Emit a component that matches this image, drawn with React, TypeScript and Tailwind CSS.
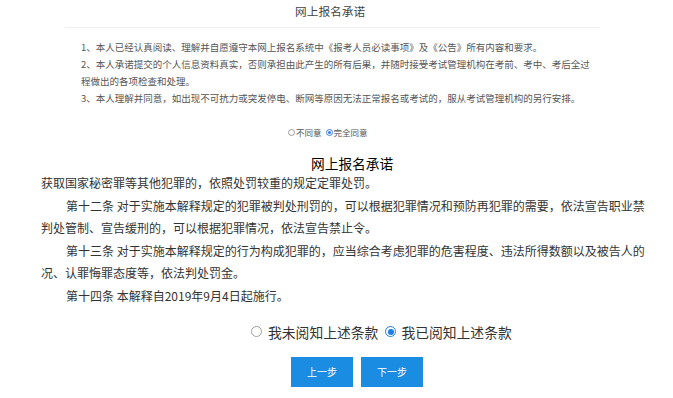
const cjk = 'font-[Noto_Sans_CJK_SC,sans-serif]';

const promises = [
  '1、本人已经认真阅读、理解并自愿遵守本网上报名系统中《报考人员必读事项》及《公告》所有内容和要求。',
  '2、本人承诺提交的个人信息资料真实，否则承担由此产生的所有后果，并随时接受考试管理机构在考前、考中、考后全过',
  '程做出的各项检查和处理。',
  '3、本人理解并同意，如出现不可抗力或突发停电、断网等原因无法正常报名或考试的，服从考试管理机构的另行安排。'
];

// [text, indented]
const articleLines: [string, boolean][] = [
  ['获取国家秘密罪等其他犯罪的，依照处罚较重的规定定罪处罚。', false],
  ['第十二条 对于实施本解释规定的犯罪被判处刑罚的，可以根据犯罪情况和预防再犯罪的需要，依法宣告职业禁', true],
  ['判处管制、宣告缓刑的，可以根据犯罪情况，依法宣告禁止令。', false],
  ['第十三条 对于实施本解释规定的行为构成犯罪的，应当综合考虑犯罪的危害程度、违法所得数额以及被告人的', true],
  ['况、认罪悔罪态度等，依法判处罚金。', false],
  ['第十四条 本解释自2019年9月4日起施行。', true]
];

const SmallRadio = ({ checked }: { checked?: boolean }) =>
  checked ? (
    <span className="flex h-[7px] w-[7px] items-center justify-center rounded-full border border-[#3b82d6] bg-white">
      <span className="h-[3px] w-[3px] rounded-full bg-[#2f7ad6]" />
    </span>
  ) : (
    <span className="h-[7px] w-[7px] rounded-full border border-[#9a9a9a] bg-white" />
  );

const Radio = ({ checked }: { checked?: boolean }) =>
  checked ? (
    <span className="flex h-[11px] w-[11px] items-center justify-center rounded-full border border-[#1a7fe0] bg-white">
      <span className="h-[6px] w-[6px] rounded-full bg-[#1a7fe0]" />
    </span>
  ) : (
    <span className="h-[11px] w-[11px] rounded-full border border-[#a0a0a0] bg-white" />
  );

export default function App() {
  return (
    <div className={`h-[398px] w-[673px] overflow-hidden bg-white ${cjk}`}>
      <section className="text-[#555]">
        <div className="pl-[295px] text-[11.7px] leading-[22px] text-[#444]">网上报名承诺</div>
        <div className="ml-[65px] mr-[73px] mt-[5px] border-t border-[#f0f0f0]" />
        <div className="mt-[11px] pl-[81px] text-[9.5px] leading-[17px]">
          {promises.map((line) => (
            <div className="whitespace-nowrap" key={line}>
              {line}
            </div>
          ))}
        </div>
        <div className="mt-[18px] flex items-center pl-[288px] text-[8.5px] leading-[14px]">
          <SmallRadio />
          <span className="ml-px">不同意</span>
          <span className="ml-[4px]">
            <SmallRadio checked />
          </span>
          <span className="ml-px">完全同意</span>
        </div>
      </section>

      <section className="text-[#333]">
        <div className="mt-[15px] pl-[311px] text-[13.7px] leading-[18px] text-black">网上报名承诺</div>
        <div className="text-[12px] leading-[22.6px]">
          {articleLines.map(([line, indented]) => (
            <div className={`whitespace-nowrap ${indented ? 'pl-[66px]' : 'pl-[41px]'}`} key={line}>
              {line}
            </div>
          ))}
        </div>
        <div className="mt-[14px] flex items-center pl-[251px] text-[13.8px] leading-[20px]">
          <Radio />
          <span className="ml-[6px]">我未阅知上述条款</span>
          <span className="ml-[7px]">
            <Radio checked />
          </span>
          <span className="ml-[5px]">我已阅知上述条款</span>
        </div>
        <div className="mt-[15px] flex gap-[8px] pl-[291px]">
          {['上一步', '下一步'].map((label) => (
            <button
              className="flex h-[30px] w-[62px] items-center justify-center bg-[#1a8ce2] text-[10px] text-white"
              key={label}
              type="button"
            >
              {label}
            </button>
          ))}
        </div>
      </section>
    </div>
  );
}
